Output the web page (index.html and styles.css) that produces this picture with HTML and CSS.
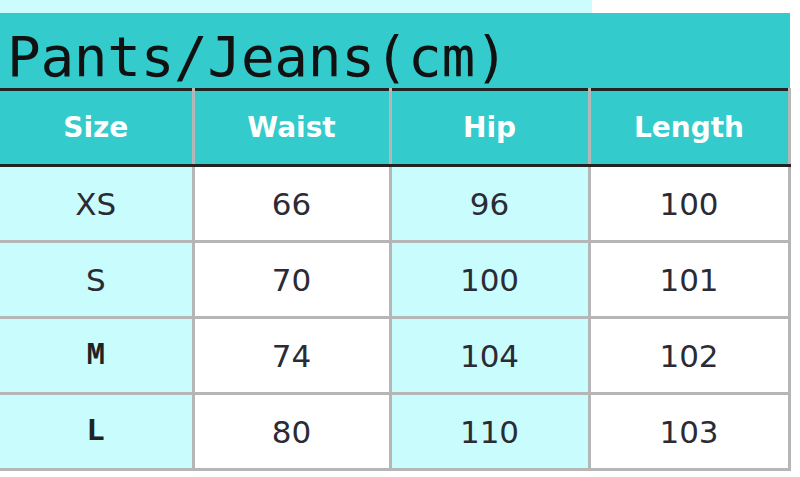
FILE: index.html
```html
<!DOCTYPE html>
<html lang="en">
<head>
<meta charset="utf-8">
<title>Pants/Jeans size chart</title>
<link rel="stylesheet" href="styles.css">
</head>
<body>
<div class="sheet">
  <div class="top-strip"></div>
  <h1 class="title">Pants/Jeans(cm)</h1>
  <table class="chart">
    <colgroup>
      <col class="c1"><col class="c2"><col class="c3"><col class="c4">
    </colgroup>
    <thead>
      <tr><th>Size</th><th>Waist</th><th>Hip</th><th>Length</th></tr>
    </thead>
    <tbody>
      <tr><td class="cyan">XS</td><td>66</td><td class="cyan">96</td><td>100</td></tr>
      <tr><td class="cyan">S</td><td>70</td><td class="cyan">100</td><td>101</td></tr>
      <tr><td class="cyan mono">M</td><td>74</td><td class="cyan">104</td><td>102</td></tr>
      <tr><td class="cyan mono">L</td><td>80</td><td class="cyan">110</td><td>103</td></tr>
    </tbody>
  </table>
</div>
</body>
</html>
```

FILE: styles.css
```css
html, body {
  margin: 0;
  padding: 0;
  background: #ffffff;
}

.sheet {
  width: 800px;
  height: 477px;
  overflow: hidden;
}

.top-strip {
  width: 592px;
  height: 13px;
  background: #cdfcfd;
}

.title {
  margin: 0;
  width: 790px;
  height: 75px;
  box-sizing: border-box;
  padding-left: 7px;
  padding-top: 11px;
  background: #33cbcb;
  font-family: "DejaVu Sans Mono", monospace;
  font-weight: normal;
  font-size: 56px;
  line-height: 66px;
  letter-spacing: -0.3px;
  color: #111111;
  overflow: hidden;
}

.chart {
  border-collapse: collapse;
  table-layout: fixed;
  width: 789px;
}

.c1 { width: 193px; }
.c2 { width: 197px; }
.c3 { width: 199px; }
.c4 { width: 200px; }

.chart th,
.chart td {
  padding: 0;
  text-align: center;
  border-right: 3px solid #b6b6b6;
  border-bottom: 3px solid #b6b6b6;
}

.chart th {
  height: 73px;
  background: #33cbcb;
  color: #ffffff;
  font-family: "DejaVu Sans", sans-serif;
  font-weight: bold;
  font-size: 28px;
  border-top: 3px solid #232323;
  border-bottom: 3px solid #232323;
}

.chart td {
  height: 73px;
  background: #ffffff;
  color: #2b2b35;
  font-family: "DejaVu Sans", sans-serif;
  font-size: 31px;
}

.chart td.cyan {
  background: #c9fcfc;
}

.chart td.mono {
  font-family: "Liberation Mono", monospace;
  font-weight: bold;
  font-size: 31px;
  color: #222222;
}
```
